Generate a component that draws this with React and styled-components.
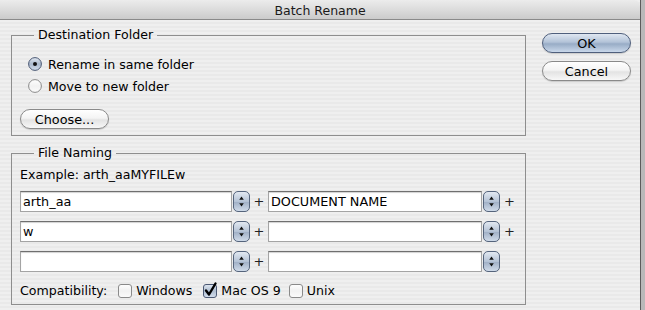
import React from "react";
import styled, { createGlobalStyle } from "styled-components";

const Global = createGlobalStyle`
  html, body { margin: 0; padding: 0; }
  body {
    width: 645px; height: 310px; overflow: hidden;
    background: #b9b9b9;
    font-family: "DejaVu Sans", "Liberation Sans", sans-serif;
    font-size: 12.6px;
    color: #000;
  }
`;

const Screen = styled.div`
  display: flex;
  width: 645px;
  height: 310px;
`;

const Window = styled.div`
  width: 640px;
  height: 310px;
  border-right: 1px solid #5c5c5c;
  display: flex;
  flex-direction: column;
  background: repeating-linear-gradient(to bottom, #efefef 0, #efefef 2px, #e9e9e9 2px, #e9e9e9 4px);
`;

const TitleBar = styled.div`
  height: 18px;
  border-bottom: 1px solid #8a8a8a;
  border-top-right-radius: 6px;
  background: linear-gradient(to bottom, #ececec 0%, #dcdcdc 50%, #cbcbcb 100%);
  display: flex;
  align-items: center;
  justify-content: center;
  font-size: 12.5px;
  color: #1a1a1a;
  padding-top: 1px;
`;

const Body = styled.div`
  display: flex;
  padding: 8px 0 0 11px;
`;

const LeftCol = styled.div`
  width: 515px;
  flex-shrink: 0;
  display: flex;
  flex-direction: column;
  gap: 10px;
`;

const RightCol = styled.div`
  display: flex;
  flex-direction: column;
  gap: 8px;
  margin-left: 16px;
  padding-top: 5px;
`;

const Group = styled.fieldset`
  margin: 0;
  border: 1px solid #8e8e8e;
  padding: ${(p) => p.$pad};
  min-width: 0;
  box-sizing: border-box;
  width: 515px;
`;

const Legend = styled.legend`
  margin-left: 14px;
  padding: 0 4px;
  line-height: 14px;
  height: 14px;
`;

const RadioRow = styled.label`
  display: flex;
  align-items: center;
  gap: 6px;
  height: 22px;
  margin-left: 8px;
`;

const PillButton = styled.button`
  box-sizing: border-box;
  width: ${(p) => p.$w}px;
  height: 20px;
  border-radius: 10px;
  border: 1px solid ${(p) => (p.$default ? "#4f5f7c" : "#8a8a8a")};
  background: ${(p) =>
    p.$default
      ? "linear-gradient(to bottom, #dfe7f1 0%, #b3c3d8 45%, #98acc6 55%, #c9d8ea 100%)"
      : "linear-gradient(to bottom, #ffffff 0%, #f4f4f4 45%, #e3e3e3 55%, #f7f7f7 100%)"};
  box-shadow: 0 1px 1px rgba(0,0,0,0.15);
  font-family: inherit;
  font-size: 12.8px;
  color: #000;
  padding: 0;
  display: flex;
  align-items: center;
  justify-content: center;
`;

const ChooseButton = styled(PillButton)`
  margin-top: 12px;
`;

const Example = styled.div`
  height: 14px;
  line-height: 14px;
  margin-bottom: 9px;
`;

const Rows = styled.div`
  display: flex;
  flex-direction: column;
  gap: 9px;
`;

const Row = styled.div`
  display: flex;
  align-items: center;
  height: 21px;
  & > * { flex-shrink: 0; }
`;

const TextField = styled.div`
  box-sizing: border-box;
  width: ${(p) => p.$w}px;
  height: 21px;
  background: #fff;
  border: 1px solid #a4a4a4;
  border-top-color: #6f6f6f;
  box-shadow: inset 0 1px 1px rgba(0,0,0,0.18);
  padding-left: 2px;
  display: flex;
  align-items: center;
  font-size: 12.8px;
`;

const Plus = styled.span`
  width: ${(p) => p.$w}px;
  text-align: center;
  font-size: 13px;
  color: #222;
`;

const StepperWrap = styled.span`
  display: flex;
  margin-left: 1px;
  width: 17px;
  height: 21px;
`;

const CompatRow = styled.div`
  display: flex;
  align-items: center;
  height: 16px;
  margin-top: 10px;
`;

const CheckItem = styled.label`
  display: flex;
  align-items: center;
  gap: 4px;
  margin-left: ${(p) => p.$ml}px;
`;

function Stepper() {
  return (
    <StepperWrap>
      <svg width="17" height="21" viewBox="0 0 17 21">
        <defs>
          <linearGradient id="stg" x1="0" y1="0" x2="0" y2="1">
            <stop offset="0" stopColor="#e4eaf2" />
            <stop offset="0.5" stopColor="#b5c3d6" />
            <stop offset="0.55" stopColor="#a3b2c8" />
            <stop offset="1" stopColor="#d2ddeb" />
          </linearGradient>
        </defs>
        <rect x="0.5" y="0.5" width="16" height="20" rx="4.5" fill="url(#stg)" stroke="#55647c" />
        <path d="M8.5 5.5 L10.8 8.8 L6.2 8.8 Z" fill="#111" />
        <path d="M8.5 15.5 L10.8 12.2 L6.2 12.2 Z" fill="#111" />
      </svg>
    </StepperWrap>
  );
}

function Radio({ checked }) {
  return (
    <svg width="14" height="14" viewBox="0 0 14 14">
      <defs>
        <linearGradient id="rsel" x1="0" y1="0" x2="0" y2="1">
          <stop offset="0" stopColor="#e2e9f2" />
          <stop offset="0.5" stopColor="#a9b8cc" />
          <stop offset="1" stopColor="#d5e0ee" />
        </linearGradient>
        <linearGradient id="roff" x1="0" y1="0" x2="0" y2="1">
          <stop offset="0" stopColor="#ffffff" />
          <stop offset="0.5" stopColor="#f2f2f2" />
          <stop offset="1" stopColor="#fbfbfb" />
        </linearGradient>
      </defs>
      <circle cx="7" cy="7" r="6.4" fill={checked ? "url(#rsel)" : "url(#roff)"} stroke={checked ? "#4b5873" : "#8a8a8a"} strokeWidth="1" />
      {checked && <circle cx="7" cy="7" r="2" fill="#111" />}
    </svg>
  );
}

function Check({ checked }) {
  return (
    <svg width="14" height="15" viewBox="0 0 14 15" style={{ overflow: "visible" }}>
      <defs>
        <linearGradient id="csel" x1="0" y1="0" x2="0" y2="1">
          <stop offset="0" stopColor="#e2e9f2" />
          <stop offset="0.5" stopColor="#aebdd0" />
          <stop offset="1" stopColor="#d5e0ee" />
        </linearGradient>
        <linearGradient id="coff" x1="0" y1="0" x2="0" y2="1">
          <stop offset="0" stopColor="#ffffff" />
          <stop offset="0.5" stopColor="#f1f1f1" />
          <stop offset="1" stopColor="#fbfbfb" />
        </linearGradient>
      </defs>
      <rect x="0.5" y="1.5" width="13" height="13" rx="2.5" fill={checked ? "url(#csel)" : "url(#coff)"} stroke={checked ? "#4b5873" : "#8a8a8a"} />
      {checked && (
        <path d="M3 7.5 L6 11.5 L12.5 0.5" fill="none" stroke="#000" strokeWidth="2.4" strokeLinejoin="round" strokeLinecap="round" />
      )}
    </svg>
  );
}

export default function App() {
  return (
    <Screen>
      <Global />
      <Window>
        <TitleBar>Batch Rename</TitleBar>
        <Body>
          <LeftCol>
            <Group $pad="11px 6px 6px 8px">
              <Legend>Destination Folder</Legend>
              <RadioRow>
                <Radio checked />
                Rename in same folder
              </RadioRow>
              <RadioRow>
                <Radio />
                Move to new folder
              </RadioRow>
              <ChooseButton $w={89}>Choose...</ChooseButton>
            </Group>
            <Group $pad="8px 6px 6px 8px">
              <Legend>File Naming</Legend>
              <Example>Example: arth_aaMYFILEw</Example>
              <Rows>
                <Row>
                  <TextField $w={212}>arth_aa</TextField>
                  <Stepper />
                  <Plus $w={18}>+</Plus>
                  <TextField $w={214}>DOCUMENT NAME</TextField>
                  <Stepper />
                  <Plus $w={19}>+</Plus>
                </Row>
                <Row>
                  <TextField $w={212}>w</TextField>
                  <Stepper />
                  <Plus $w={18}>+</Plus>
                  <TextField $w={214} />
                  <Stepper />
                  <Plus $w={19}>+</Plus>
                </Row>
                <Row>
                  <TextField $w={212} />
                  <Stepper />
                  <Plus $w={18}>+</Plus>
                  <TextField $w={214} />
                  <Stepper />
                </Row>
              </Rows>
              <CompatRow>
                <span>Compatibility:</span>
                <CheckItem $ml={11}>
                  <Check />
                  Windows
                </CheckItem>
                <CheckItem $ml={11}>
                  <Check checked />
                  Mac OS 9
                </CheckItem>
                <CheckItem $ml={8}>
                  <Check />
                  Unix
                </CheckItem>
              </CompatRow>
            </Group>
          </LeftCol>
          <RightCol>
            <PillButton $w={89} $default>OK</PillButton>
            <PillButton $w={89}>Cancel</PillButton>
          </RightCol>
        </Body>
      </Window>
    </Screen>
  );
}
